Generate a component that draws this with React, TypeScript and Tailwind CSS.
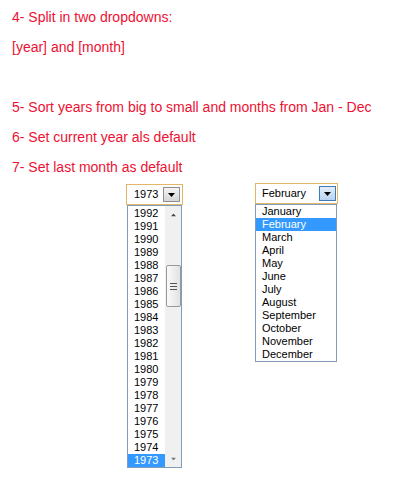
import React from 'react'

const years = Array.from({ length: 20 }, (_, i) => 1992 - i)
const months = [
  'January',
  'February',
  'March',
  'April',
  'May',
  'June',
  'July',
  'August',
  'September',
  'October',
  'November',
  'December',
]

const Caret = ({ className = '' }: { className?: string }) => (
  <svg width="7" height="4" viewBox="0 0 7 4" className={className}>
    <path d="M0 0h7L3.5 4z" fill="currentColor" />
  </svg>
)

const ArrowButton = ({ active }: { active?: boolean }) => (
  <div
    className={
      active
        ? 'flex items-center justify-center w-[17px] h-[15px] border border-[#3d7bb5] bg-gradient-to-b from-[#e4eefb] to-[#b9d2f0] text-black'
        : 'flex items-center justify-center w-[17px] h-[15px] border border-[#8e8f8f] bg-gradient-to-b from-[#f4f4f4] to-[#d6d6d6] text-black'
    }
  >
    <Caret />
  </div>
)

const YearDropdown = () => (
  <div className="flex flex-col mt-[1px]">
    <div className="flex items-center justify-between w-[57px] h-[21px] border border-[#e3b766] bg-white pl-[7px] pr-[2px]">
      <span>1973</span>
      <ArrowButton />
    </div>
    <div className="flex ml-[1px] w-[55px] border border-[#7f9db9] bg-white">
      <div className="flex flex-col flex-1 pt-[1px]">
        {years.map((y) => (
          <div
            key={y}
            className={
              y === 1973
                ? 'h-[13px] leading-[13px] pl-[6px] bg-[#3399ff] text-white'
                : 'h-[13px] leading-[13px] pl-[6px] text-black'
            }
          >
            {y}
          </div>
        ))}
      </div>
      <div className="flex flex-col items-center w-[16px] bg-[#f0f0f0] text-[#444]">
        <div className="flex items-center justify-center h-[17px]">
          <Caret className="rotate-180 scale-75" />
        </div>
        <div className="h-[42px]" />
        <div className="flex flex-col items-center justify-center gap-[2px] w-[15px] h-[42px] border border-[#9a9a9a] rounded-[2px] bg-gradient-to-r from-[#fafafa] to-[#e2e2e2]">
          <div className="w-[7px] h-px bg-[#555]" />
          <div className="w-[7px] h-px bg-[#555]" />
          <div className="w-[7px] h-px bg-[#555]" />
        </div>
        <div className="flex-1" />
        <div className="flex items-center justify-center h-[17px] text-[#777]">
          <Caret className="scale-75" />
        </div>
      </div>
    </div>
  </div>
)

const MonthDropdown = () => (
  <div className="flex flex-col">
    <div className="flex items-center justify-between w-[83px] h-[21px] border border-[#e3b766] bg-white pl-[6px] pr-[1px]">
      <span>February</span>
      <ArrowButton active />
    </div>
    <div className="flex flex-col w-[82px] border border-[#7f9db9] bg-white">
      {months.map((m) => (
        <div
          key={m}
          className={
            m === 'February'
              ? 'h-[13px] leading-[13px] pl-[6px] bg-[#3399ff] text-white'
              : 'h-[13px] leading-[13px] pl-[6px] text-black'
          }
        >
          {m}
        </div>
      ))}
    </div>
  </div>
)

export default function App() {
  return (
    <div className="w-[402px] h-[485px] bg-white overflow-hidden">
      <div className="pl-[12px] pt-[2px] text-[14px] leading-[30px] text-[#ee1133] font-['Liberation_Sans',Arial,sans-serif]">
        <p>4- Split in two dropdowns:</p>
        <p>[year] and [month]</p>
        <p>&nbsp;</p>
        <p>5- Sort years from big to small and months from Jan - Dec</p>
        <p>6- Set current year als default</p>
        <p>7- Set last month as default</p>
      </div>
      <div className="flex items-start gap-[72px] pl-[126px] mt-[1px] text-[11px] text-black font-['Liberation_Sans',Tahoma,sans-serif]">
        <YearDropdown />
        <MonthDropdown />
      </div>
    </div>
  )
}
